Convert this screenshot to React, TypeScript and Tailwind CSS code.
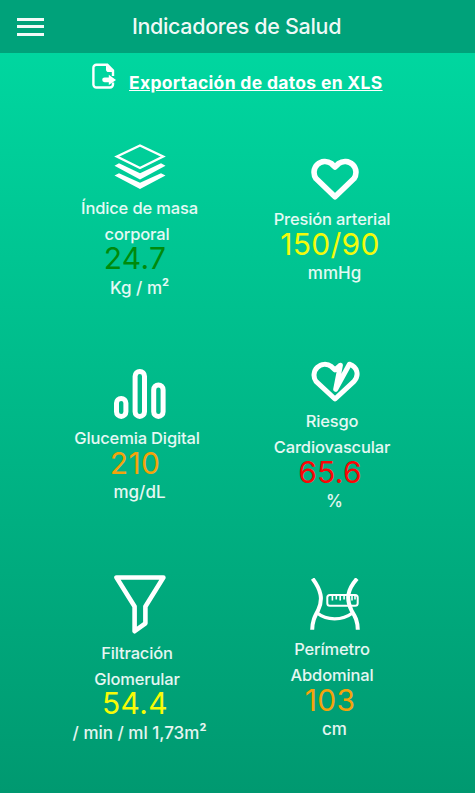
import type { ReactNode } from "react";
import clsx from "clsx";

type Indicator = {
	icon: ReactNode;
	label: string[];
	value: string;
	unit: string;
	squared?: boolean;
	color: string;
};

function LayersIcon() {
	return (
		<svg width="52" height="45" viewBox="0 0 52 45" fill="#fff">
			<path
				d="M2.9 12.5 26 1.5 49.1 12.5 26 24Z"
				fill="none"
				stroke="#fff"
				strokeWidth="2.4"
			/>
			<path d="M.5 21.8 5 19.3 26 29.2 47 19.3 51.5 21.8 26 35.4Z" />
			<path d="M.5 31.6 5 29.2 26 38.8 47 29.2 51.5 31.6 26 45Z" />
		</svg>
	);
}

function HeartIcon() {
	return (
		<svg width="50" height="42" viewBox="0 0 50 42" fill="none">
			<path
				d="M25 38.8 6 20.6A10.9 10.9 0 0 1 21.4 5.6L25 9l3.6-3.4a10.9 10.9 0 0 1 15.4 15Z"
				stroke="#fff"
				strokeWidth="5.6"
				strokeLinejoin="round"
			/>
		</svg>
	);
}

function BarsIcon() {
	return (
		<svg
			width="52"
			height="50"
			viewBox="0 0 52 50"
			fill="none"
			stroke="#fff"
			strokeWidth="5"
		>
			<rect x="2.5" y="29.4" width="9.4" height="18" rx="4.7" />
			<rect x="21.1" y="2.5" width="9.4" height="44.9" rx="4.7" />
			<rect x="39.7" y="16" width="9.4" height="31.4" rx="4.7" />
		</svg>
	);
}

function BrokenHeartIcon() {
	return (
		<svg width="50" height="41" viewBox="0 0 50 41" fill="none">
			<path
				d="M30.4 4.2 25 8.8 21.4 5.6A10.8 10.8 0 0 0 6 20.4L25 38 44 20.4C49.6 14 47.2 5.8 39.4 3.2L25.7 28.3Z"
				stroke="#fff"
				strokeWidth="5"
				strokeLinejoin="round"
			/>
		</svg>
	);
}

function FunnelIcon() {
	return (
		<svg width="52" height="59" viewBox="0 0 52 59" fill="none">
			<path
				d="M2.5 2.5H49.4L31.4 31.5V48.3L20.6 56.2V31.5Z"
				stroke="#fff"
				strokeWidth="4.6"
				strokeLinejoin="round"
			/>
		</svg>
	);
}

function WaistIcon() {
	return (
		<svg width="51" height="52" viewBox="0 0 51 52" fill="none" stroke="#fff">
			<g strokeWidth="4">
				<path d="M3.6 .6C12 12 14.5 21 9 32.5 5.5 39 3.4 43 3.2 51.8" />
				<path d="M48 .6C38 12 37 21 42.5 32.5 46.5 39 48.6 43 48.8 51.8" />
				<path d="M7.5 34.5C18 43 33 43 44.2 34.5" strokeWidth="3.4" />
			</g>
			<rect x="18.3" y="17" width="30.4" height="10.8" rx="2.6" strokeWidth="2" />
			<path
				d="M23.4 17v5.6M27.3 17v4.6M31.2 17v5.6M35.1 17v4.6M43 17v5.6M46 17v4.6"
				strokeWidth="1.6"
			/>
		</svg>
	);
}

function ExportIcon() {
	return (
		<svg width="25" height="26" viewBox="0 0 25 26" fill="none">
			<path
				d="M21 19.5V21.5a3 3 0 0 1-3 3H4.4a3 3 0 0 1-3-3V4.7a3 3 0 0 1 3-3H15.3L21 7.5V13"
				stroke="#fff"
				strokeWidth="2.4"
			/>
			<path d="M14 1.5 21.6 9H16.5Q14 9 14 6.2Z" fill="#fff" />
			<path
				d="M12.6 14.4H16.8V11.8L24 16.9 16.8 22V19.2H12.6a2.4 2.4 0 0 1 0-4.8Z"
				fill="#fff"
			/>
		</svg>
	);
}

const indicators: Indicator[] = [
	{
		icon: <LayersIcon />,
		label: ["Índice de masa", "corporal"],
		value: "24.7",
		unit: "Kg / m",
		squared: true,
		color: "text-[#008a0b]",
	},
	{
		icon: <HeartIcon />,
		label: ["Presión arterial"],
		value: "150/90",
		unit: "mmHg",
		color: "text-[#f4fb0a]",
	},
	{
		icon: <BarsIcon />,
		label: ["Glucemia Digital"],
		value: "210",
		unit: "mg/dL",
		color: "text-[#f5a30a]",
	},
	{
		icon: <BrokenHeartIcon />,
		label: ["Riesgo", "Cardiovascular"],
		value: "65.6",
		unit: "%",
		color: "text-[#fb0606]",
	},
	{
		icon: <FunnelIcon />,
		label: ["Filtración", "Glomerular"],
		value: "54.4",
		unit: "/ min / ml 1,73m",
		squared: true,
		color: "text-[#f8fb06]",
	},
	{
		icon: <WaistIcon />,
		label: ["Perímetro", "Abdominal"],
		value: "103",
		unit: "cm",
		color: "text-[#f5a30a]",
	},
];

function IndicatorCard({
	icon,
	label,
	value,
	unit,
	squared,
	color,
}: Indicator) {
	return (
		<button
			type="button"
			className="flex flex-col items-center justify-center whitespace-nowrap leading-[26px] font-medium text-white/90"
		>
			{icon}
			<span className="mt-1.5 flex flex-col items-center pr-[5px] text-[16.5px] tracking-[-0.15px]">
				{label.map((line) => (
					<span
						key={line}
						className={clsx(line === "Índice de masa" && "pl-[5px]")}
					>
						{line}
					</span>
				))}
			</span>
			<span
				className={clsx(
					"pr-[9px] text-[30px] leading-[23px] font-normal tracking-[0.3px]",
					label.length === 1 || !squared ? "pt-px" : "pb-px",
					color,
				)}
			>
				{value}
			</span>
			<span className="mt-1 text-[17px]">
				{unit}
				{squared && (
					<span className="relative -top-0.5 font-['Roboto',sans-serif] text-[19px] leading-0">
						²
					</span>
				)}
			</span>
		</button>
	);
}

export default function App() {
	return (
		<div className="flex h-[793px] w-[475px] flex-col overflow-hidden bg-linear-to-b from-[#00dba3] to-[#009970] font-['Inter',sans-serif] text-white">
			<header className="grid h-[53px] shrink-0 grid-cols-[60px_1fr_60px] items-center bg-[#00a27a]">
				<button
					type="button"
					aria-label="Menú"
					className="ml-[17px] flex w-[27px] flex-col gap-[4.5px]"
				>
					<span className="h-[3px] bg-white/95" />
					<span className="h-[3px] bg-white/95" />
					<span className="h-[3px] bg-white/95" />
				</button>
				<h1 className="pr-[2px] text-center text-[21.5px] font-medium tracking-[-0.33px] text-white/95">
					Indicadores de Salud
				</h1>
			</header>

			<div className="flex h-[59px] shrink-0 items-start gap-3 pl-[92px] pt-[10px]">
				<ExportIcon />
				<a
					href="#"
					className="mt-2 whitespace-nowrap text-[17.5px] leading-6 font-bold tracking-[0.32px] underline"
				>
					Exportación de datos en XLS
				</a>
			</div>

			<main className="grid grid-cols-[195px_195px] grid-rows-[220px_210px_236px] pl-[42px]">
				{indicators.map((item) => (
					<IndicatorCard key={item.value} {...item} />
				))}
			</main>
		</div>
	);
}
